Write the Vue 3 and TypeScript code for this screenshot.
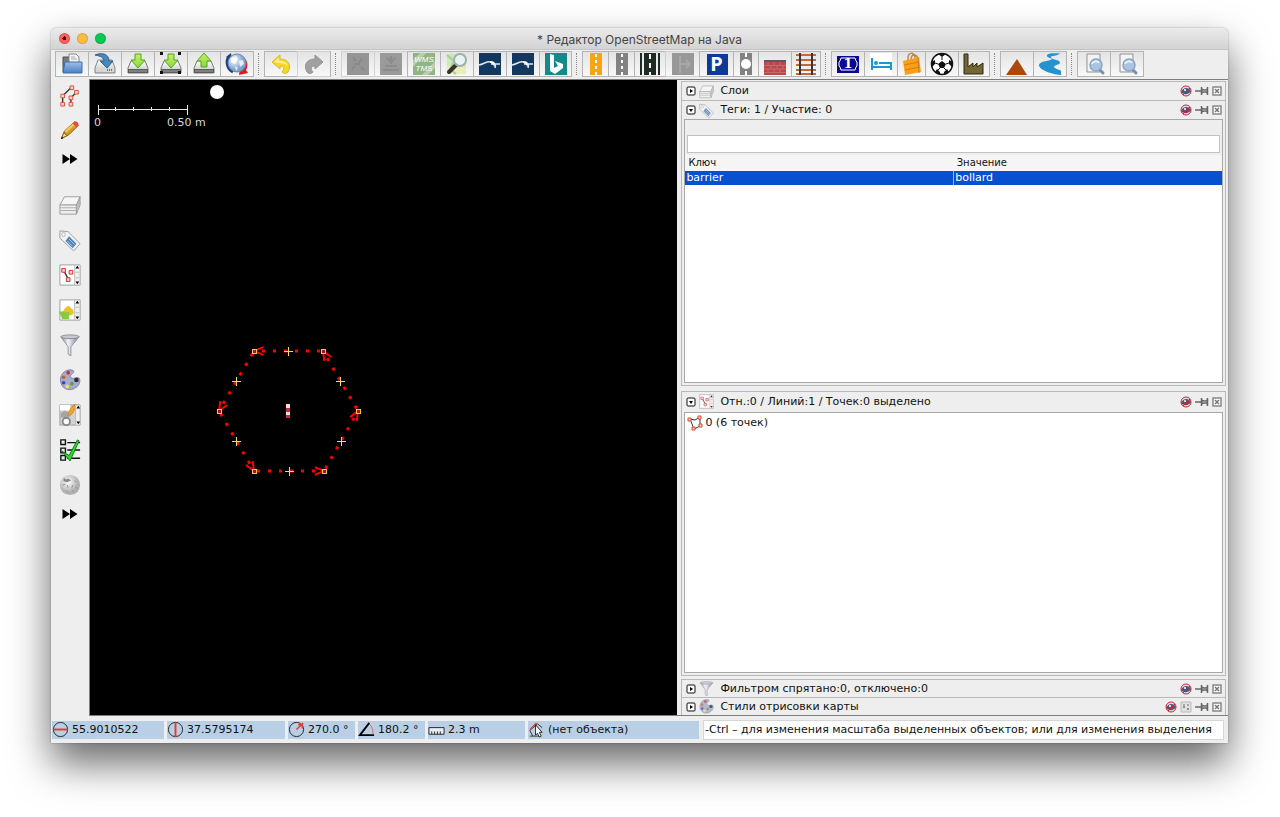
<script setup lang="ts">
import { ref } from 'vue'

interface Tool { icon: string; label: string; w: number; disabled?: boolean }
interface Point { x: number; y: number }

const t = (icon: string, label: string, w = 33, disabled = false): Tool => ({ icon, label, w, disabled })

const toolGroups: Tool[][] = [
  [t('open', 'Открыть'), t('save', 'Сохранить'), t('download', 'Загрузить'), t('download-sel', 'Загрузить область'), t('upload', 'Отправить'), t('globe', 'Обновить')],
  [t('undo', 'Отменить'), t('redo', 'Повторить', 33, true)],
  [t('gray-a', 'Слой', 33, true), t('gray-b', 'Слияние', 33, true), t('wms', 'WMS TMS'), t('find', 'Карта'), t('sat', 'Снимки'), t('sat', 'Снимки 2'), t('bing', 'Bing', 32)],
  [t('road-o', 'Магистраль', 26), t('road-g', 'Дорога', 26), t('road-d', 'Шоссе', 31), t('turn', 'Поворот', 34, true), t('parking', 'Парковка', 34), t('node', 'Узел', 25), t('wall', 'Стена'), t('rail', 'Железная дорога', 29)],
  [t('shield', 'Номер дороги'), t('bed', 'Гостиница'), t('bag', 'Магазин', 28), t('ball', 'Спорт'), t('factory', 'Промзона', 31)],
  [t('peak', 'Вершина'), t('river', 'Река')],
  [t('preset', 'Заготовка'), t('preset', 'Поиск заготовки')],
]
const captions: Record<string, string[]> = { wms: ['WMS', 'TMS'], parking: ['P'], shield: ['1'] }

const modes = [
  { icon: 'select', label: 'Выделение', cls: 'mode' },
  { icon: 'pencil', label: 'Рисование', cls: 'mode' },
  { icon: 'more', label: 'Ещё режимы', cls: 'more' },
]
const dialogs = [
  { icon: 'layers', label: 'Слои', cls: 'dialog' },
  { icon: 'tag', label: 'Теги', cls: 'dialog' },
  { icon: 'selection', label: 'Выделенное', cls: 'dialog' },
  { icon: 'relations', label: 'Отношения', cls: 'dialog' },
  { icon: 'filter', label: 'Фильтр', cls: 'dialog' },
  { icon: 'palette', label: 'Стили', cls: 'dialog' },
  { icon: 'authors', label: 'Правки', cls: 'dialog' },
  { icon: 'check', label: 'Проверка', cls: 'dialog' },
  { icon: 'wiki', label: 'Википедия', cls: 'dialog' },
  { icon: 'more', label: 'Ещё панели', cls: 'more' },
]

const search = ref('')
const help = ref('-Ctrl – для изменения масштаба выделенных объектов; или для изменения выделения')
const tags = [{ key: 'barrier', value: 'bollard' }]

const status = [
  { icon: 'lat', text: '55.9010522', cls: 'lat' },
  { icon: 'lon', text: '37.5795174', cls: 'lon' },
  { icon: 'heading', text: '270.0 °', cls: 'angle' },
  { icon: 'angle', text: '180.2 °', cls: 'angle' },
  { icon: 'ruler', text: '2.3 m', cls: 'dist' },
  { icon: 'cursor', text: '(нет объекта)', cls: 'object' },
]

const nodes: Point[] = [
  { x: 233, y: 271 }, { x: 164, y: 271 }, { x: 129, y: 331 },
  { x: 164, y: 391 }, { x: 234, y: 391 }, { x: 268, y: 331 },
]
const segments = nodes.map((a, i) => {
  const b = nodes[(i + 1) % nodes.length]
  const angle = Math.atan2(b.y - a.y, b.x - a.x)
  const wing = (d: number) => `${b.x - 10 * Math.cos(angle + d)} ${b.y - 10 * Math.sin(angle + d)}`
  return {
    line: `M${a.x} ${a.y}L${b.x} ${b.y}`,
    head: `M${wing(0.4)}L${b.x} ${b.y}L${wing(-0.4)}`,
    mid: `M${Math.floor((a.x + b.x) / 2) - 4} ${Math.floor((a.y + b.y) / 2)}h9m-5 -4v9`,
  }
})
const ticks = [25, 43, 61, 79]
</script>

<template>
  <svg class="sprite" aria-hidden="true">
    <defs>
      <linearGradient id="g-disk" x1="0" y1="0" x2="0" y2="1"><stop offset="0" stop-color="#fff" /><stop offset="1" stop-color="#bfc2c2" /></linearGradient>
      <linearGradient id="g-blue" x1="0" y1="0" x2="0" y2="1"><stop offset="0" stop-color="#9cc0ea" /><stop offset="1" stop-color="#4c7fbd" /></linearGradient>
      <linearGradient id="g-green" x1="0" y1="0" x2="0" y2="1"><stop offset="0" stop-color="#c3f06e" /><stop offset="1" stop-color="#8ad83a" /></linearGradient>
      <linearGradient id="g-metal"><stop offset="0" stop-color="#85859a" /><stop offset=".4" stop-color="#f2f2f8" /><stop offset="1" stop-color="#77778a" /></linearGradient>
      <radialGradient id="g-globe" cx=".35" cy=".35"><stop offset="0" stop-color="#fff" /><stop offset="1" stop-color="#7fa3cf" /></radialGradient>
      <radialGradient id="g-wiki" cx=".4" cy=".35"><stop offset="0" stop-color="#fff" /><stop offset="1" stop-color="#b0b0b0" /></radialGradient>
    </defs>

    <symbol id="open" viewBox="0 0 24 24">
      <path d="M3 20V5h6l1 2h2v12z" fill="#777b80" stroke="#4c5156" /><path d="M9 11V2h7l3 3v9H9z" fill="#f5f5f5" stroke="#888" /><path d="M11 5h4M11 7h6" stroke="#aaa" />
      <path d="M5 10h17v11H3z" fill="url(#g-blue)" stroke="#3b6eae" />
    </symbol>
    <symbol id="disk" viewBox="0 0 24 24">
      <path d="M5 8h14l3 8v5H2v-5z" fill="url(#g-disk)" stroke="#82868a" /><path d="M3 16h18v4H3z" fill="#d5d7d7" /><path d="M14 18h6" stroke="#777" stroke-dasharray="1 1" stroke-width="2" />
    </symbol>
    <symbol id="tray" viewBox="0 0 24 24">
      <path d="M5 9h14l3 7v5H2v-5z" fill="url(#g-disk)" stroke="#77797a" /><path d="M2 17h20v4H2z" fill="#5b5e5b" /><path d="M3 19h18" stroke="#a0a59f" />
    </symbol>
    <symbol id="save" viewBox="0 0 24 24"><use href="#disk" /><path d="M2 3C9 0 16 2 16 9h4l-6 7-7-7h4C11 6 8 4 2 3z" fill="#4d87b8" stroke="#2c608e" /></symbol>
    <symbol id="download" viewBox="0 0 24 24"><use href="#tray" /><path d="M9 2h6v6h4l-7 8-7-8h4z" fill="url(#g-green)" stroke="#55a51b" /></symbol>
    <symbol id="download-sel" viewBox="0 0 24 24"><use href="#tray" /><path d="M9 2h6v6h4l-7 8-7-8h4z" fill="url(#g-green)" stroke="#55a51b" /><path d="M1 0h3v3H1zM19 0h3v3h-3zM1 19h3v3H1zM19 19h3v3h-3z" fill="#111" /></symbol>
    <symbol id="upload" viewBox="0 0 24 24"><use href="#tray" /><path d="M9 15h6V9h4l-7-8-7 8h4z" fill="url(#g-green)" stroke="#55a51b" /></symbol>
    <symbol id="globe" viewBox="0 0 24 24">
      <path d="M1 5l5-4 1 8z" fill="#1d3f7a" /><path d="M3 6A11 11 0 0 0 8 20" fill="none" stroke="#1d3f7a" stroke-width="3" /><path d="M14 3a10 10 0 0 1 7 15l2 3-9 2 1-8 2 2" fill="#d81e1e" />
      <circle cx="12" cy="11" r="9" fill="url(#g-globe)" stroke="#6b86b3" /><path d="M6 6l5-2 2 3-3 5-4-2zM14 9l4-1 1 4-4 3zM10 14l3 2-2 3z" fill="#fff" opacity=".8" />
    </symbol>
    <symbol id="undo" viewBox="0 0 24 24"><path d="M3 10l8-7v4c8 0 12 6 8 13-2 2-4 2-6 0 3-3 2-6-2-6v3z" fill="#f7d922" stroke="#d9b928" /><path d="M5 10l5-4v3c5 0 8 2 9 5-2-2-5-3-9-3z" fill="#fdf09a" /></symbol>
    <symbol id="redo" viewBox="0 0 24 24"><path d="M21 10l-8-7v4C5 7 1 13 5 20c2 2 4 2 6 0-3-3-2-6 2-6v3z" fill="#a0a0a0" stroke="#949494" /></symbol>
    <symbol id="gray-a" viewBox="0 0 24 24"><path d="M1 1h22v22H1z" fill="#959595" /><path d="M7 5l3 4M16 6l-3 5M6 17l3-3M15 15l3 3M9 12h5" stroke="#8a8a8a" stroke-width="2" /></symbol>
    <symbol id="gray-b" viewBox="0 0 24 24"><path d="M1 1h22v22H1z" fill="#9a9a9a" /><path d="M8 6l4 4 4-4M12 4v8M6 14h12M4 18h16" stroke="#8c8c8c" stroke-width="2" fill="none" /></symbol>
    <symbol id="wms" viewBox="0 0 24 24"><path d="M1 1h22v22H1z" fill="#8fb583" /><path d="M1 8l7-7h6L1 15zM10 23L23 9v7l-7 7z" fill="#b7cfaa" /></symbol>
    <symbol id="find" viewBox="0 0 24 24"><path d="M2 2h19v20H2z" fill="#cfe5bc" /><path d="M2 15l9-6 10 7v6H2z" fill="#e9efb6" /><path d="M2 3l7 6-4 8 6 5" stroke="#a8cf90" fill="none" stroke-width="2" /><path d="M11 13l-7 7" stroke="#333" stroke-width="4" stroke-linecap="round" /><circle cx="15" cy="8" r="6" fill="#edf8ff" fill-opacity=".8" stroke="#9db0ac" stroke-width="2" /></symbol>
    <symbol id="sat" viewBox="0 0 24 24"><path d="M1 1h22v22H1z" fill="#13375e" /><path d="M1 13c5-1 8-4 12-3 4 0 5 3 4 6M13 12h9" stroke="#dbeaf4" stroke-width="1.500" fill="none" /><path d="M12 9c4 0 6 3 4 6 0-2-2-4-4-4z" fill="#fff" /></symbol>
    <symbol id="bing" viewBox="0 0 24 24"><path d="M1 1h22v22H1z" fill="#12898a" /><path d="M6 2l4 1v13l4-2-3-5 8 3v4l-8 6-5-3z" fill="#fff" /></symbol>
    <symbol id="road-o" viewBox="0 0 24 24"><path d="M6 1h12v22H6z" fill="#fba40d" /><path d="M12 2v21" stroke="#fff" stroke-width="2" stroke-dasharray="3 3" /></symbol>
    <symbol id="road-g" viewBox="0 0 24 24"><path d="M6 1h12v22H6z" fill="#828282" /><path d="M12 2v21" stroke="#fff" stroke-width="2" stroke-dasharray="3 3" /></symbol>
    <symbol id="road-d" viewBox="0 0 24 24"><path d="M2 1h2v22H2zM6 1h12v22H6zM20 1h2v22h-2z" fill="#1d2b22" /><path d="M12 2v21" stroke="#fff" stroke-width="2" stroke-dasharray="5 4" /></symbol>
    <symbol id="turn" viewBox="0 0 24 24"><path d="M1 1h22v22H1z" fill="#989898" /><path d="M9 4v17M9 12h9M15 8l4 4-4 4" stroke="#a8a8a8" stroke-width="2" fill="none" /></symbol>
    <symbol id="parking" viewBox="0 0 24 24"><path d="M2 2h21v21H2z" fill="#0b3b96" /></symbol>
    <symbol id="node" viewBox="0 0 24 24"><path d="M6 1h12v22H6z" fill="#828282" /><path d="M12 1v22" stroke="#fff" stroke-width="2" stroke-dasharray="4 14" /><circle cx="12" cy="12" r="5" fill="#fff" /></symbol>
    <symbol id="wall" viewBox="0 0 24 24"><path d="M1 8h22v15H1z" fill="#b8484a" /><path d="M1 8h22v2H1z" fill="#5b5b5b" /><path d="M1 13.500h22M1 17h22M1 20.500h22M5 10v3m6-3v3m6-3v3M8 14v3m6-3v3m6-3v3M5 17v3m6-3v3m6-3v3" stroke="#c96a68" fill="none" /></symbol>
    <symbol id="rail" viewBox="0 0 24 24"><path d="M2 3h20M2 8h20M2 13h20M2 18h20M2 22h20" stroke="#c8672f" stroke-width="2" /><path d="M6 1v22M18 1v22" stroke="#3b3432" stroke-width="2" /></symbol>
    <symbol id="shield" viewBox="0 0 24 24"><path d="M1 4h22v17H1z" fill="#0a0a8c" /><path d="M5 6h14l1 3 1 1v4l-1 1-1 3H5l-1-3-1-1v-4l1-1z" fill="none" stroke="#fff" /></symbol>
    <symbol id="bed" viewBox="0 0 24 24"><path d="M1 1h22v22H1z" fill="#fff" /><path d="M3 6v12M22 10v8M3 15h19M10 11h12" stroke="#1b98cf" stroke-width="2" /><circle cx="7" cy="11" r="2" fill="#1b98cf" /></symbol>
    <symbol id="bag" viewBox="0 0 24 24"><path d="M8 8C7 0 15-1 15 6M11 8c0-7 6-6 7-1" fill="none" stroke="#b9854d" stroke-width="1.500" /><path d="M3 9l16-4 2 15-16 3z" fill="#f99f18" /><path d="M4 13l15-3M5 18l15-3M18 6l1 15" stroke="#d97a10" /></symbol>
    <symbol id="ball" viewBox="0 0 24 24"><circle cx="12" cy="12" r="10.500" fill="#fff" stroke="#111" stroke-width="1.500" /><path d="M12 9l4 3-2 4h-4l-2-4zM8 2h8l-4 3zM1 10l4-2v4l-3 3zM23 10l-4-2v4l3 3zM5 20l2-3 3 3v3zM19 20l-2-3-3 3v3z" fill="#111" /><path d="M12 5v3M16 12l3-1M14 16l2 2M10 16l-2 2M8 12l-3-1" stroke="#111" /></symbol>
    <symbol id="factory" viewBox="0 0 24 24"><path d="M2 22V2h4v13l5-4v4l4-4v4l6-4v11z" fill="#746733" stroke="#2c2716" /></symbol>
    <symbol id="peak" viewBox="0 0 24 24"><path d="M12 7l10 16H1z" fill="#ac4808" /></symbol>
    <symbol id="river" viewBox="0 0 24 24"><path d="M9 3c4-3 10-1 13-2-3 4-9 2-9 4 0 3 9 2 9 6-1 2-6 2-6 4 1 2 7 3 7 4v4C13 22 1 18 1 13c0-4 12-4 13-6 0-1-6-1-5-4z" fill="#2493cf" /></symbol>
    <symbol id="preset" viewBox="0 0 24 24"><path d="M5 2h13v18H5z" fill="#f4f4f4" stroke="#919191" /><path d="M17 17l4 4" stroke="#768faa" stroke-width="3" stroke-linecap="round" /><circle cx="14" cy="13" r="6" fill="#a9c4e0" stroke="#8ba3c4" stroke-width="1.500" /><path d="M10 12a4 4 0 0 1 7-1" stroke="#e6f1fc" stroke-width="2" fill="none" /></symbol>

    <symbol id="select" viewBox="0 0 24 24"><path d="M4 20v-8l10-10M13 20v-6l6-6" fill="none" stroke="#333" stroke-width="1.500" /><path d="M2 19h4v4H2zM2 10h4v4H2zM12 1h4v4h-4zM17 6h4v4h-4zM11 12h4v4h-4zM11 19h4v4h-4z" fill="#fbd3c8" stroke="#d9493b" /></symbol>
    <symbol id="pencil" viewBox="0 0 24 24"><path d="M3 21l3-8L17 3l4 4L11 17z" fill="#d59a24" stroke="#80580f" /><path d="M6 13L17 3l2 2L8 15z" fill="#f1c65c" /><path d="M17 3c2-1 5 1 4 4l-2 2-4-4z" fill="#e34a45" /><path d="M3 21l2-6 4 3z" fill="#f1dcb0" stroke="#80580f" /><path d="M2 22l1-3 2 2z" fill="#222" /></symbol>
    <symbol id="more" viewBox="0 0 24 24"><path d="M3 6l9 6-9 6zM12 6l9 6-9 6z" fill="#000" /></symbol>
    <symbol id="layers" viewBox="0 0 24 24"><path d="M1 12L6 3h17l-4 9z" fill="#f6f6f6" stroke="#999" /><path d="M1 12h18v10H1z" fill="#eee" stroke="#999" /><path d="M19 12l4-9v9l-4 10z" fill="#ddd" stroke="#999" /><path d="M1 15h18l4-9M1 18h18l4-9" fill="none" stroke="#aaa" /></symbol>
    <symbol id="tag" viewBox="0 0 24 24"><path d="M1 2l9 1 13 13-7 8L1 10z" fill="#f3f3f3" stroke="#999" /><circle cx="5" cy="6" r="2" fill="#fff" stroke="#aaa" /><path d="M11 8l8 8-4 5-8-8z" fill="#4c82b8" /><path d="M11 11l6 6M9 13l6 6" stroke="#b9d2ea" /></symbol>
    <symbol id="listbox" viewBox="0 0 24 24"><path d="M1 1h22v22H1z" fill="#fff" stroke="#999" /><path d="M17 1h6v22h-6z" fill="#eee" stroke="#bbb" /><path d="M18 5l2-3 2 3zM18 19l2 3 2-3z" fill="#000" /><path d="M18 9h4M18 15h4" stroke="#bbb" /></symbol>
    <symbol id="selection" viewBox="0 0 24 24"><use href="#listbox" /><path d="M5 7l5 9" stroke="#333" stroke-width="1.500" /><path d="M3 5h4v4H3zM11 7h4v4h-4zM8 15h4v4H8z" fill="#fbd3c8" stroke="#d22" /></symbol>
    <symbol id="relations" viewBox="0 0 24 24"><use href="#listbox" /><path d="M5 14c0-4 3-4 4-6h3c0 3 4 2 4 7 0 4-11 4-11-1z" fill="#ecc02a" /><path d="M0 13c2 1 3 1 5 0 2 2 4 2 6 1 1 3-1 5 0 8H3c1-3-3-5-3-9z" fill="#83cc3c" /></symbol>
    <symbol id="filter" viewBox="0 0 24 24"><path d="M2 3l8 11v8l3 2v-10l9-11z" fill="url(#g-metal)" stroke="#8d8da0" /><ellipse cx="12" cy="3" rx="10" ry="2" fill="#c9c9d2" stroke="#888899" /></symbol>
    <symbol id="palette" viewBox="0 0 24 24"><path d="M14 1C5 0 0 8 2 15c2 8 11 9 15 6 5-2 7-8 5-11-3-2-7 2-9-1-2-3 4-4 3-7z" fill="#a9a9c9" stroke="#8080a5" /><circle cx="10" cy="4" r="2" fill="#ba3345" /><circle cx="5" cy="9" r="2" fill="#b9662e" /><circle cx="5" cy="15" r="2" fill="#334bc0" /><circle cx="9" cy="19" r="2" fill="#e9e065" /><circle cx="14" cy="16" r="2" fill="#55a348" /><circle cx="19" cy="12" r="2.500" fill="#252c44" /></symbol>
    <symbol id="authors" viewBox="0 0 24 24"><path d="M1 1h22v22H1z" fill="#d2d2d2" stroke="#999" /><path d="M1 1h11v6H1z" fill="#fff" /><path d="M2 10l4-3 4 2 3 4-5 2H2z" fill="#a5a5a5" /><circle cx="8" cy="19" r="4" fill="#fff" stroke="#888" stroke-width="2" /><path d="M9 13l2-5 5-7 3 2-5 8z" fill="#f3a32c" stroke="#cf8a2c" /><path d="M16 1l3 2 1-3z" fill="#e0443c" /><path d="M18 1h5v22h-5z" fill="#eee" stroke="#bbb" /><path d="M19 5l2-3 2 3zM19 19l2 3 2-3z" fill="#000" /></symbol>
    <symbol id="check" viewBox="0 0 24 24"><path d="M2 1h5v5H2zM2 10h5v5H2zM2 18h5v5H2zM9 4h14M9 12h14M9 21h14" fill="none" stroke="#111" stroke-width="1.500" /><path d="M3 13l8 5L20 1l2 1-10 22z" fill="#28d928" stroke="#12791a" /></symbol>
    <symbol id="wiki" viewBox="0 0 24 24"><circle cx="12" cy="12" r="11" fill="url(#g-wiki)" /><path d="M5 4l3 2 2-1 3 2-4 2-4-1z" fill="#888" /><path d="M4 12l3-1M17 7l2 2M9 12l1 3M15 12l-1 3M18 14l2 2M8 18l2 2M14 18l2 1" fill="none" stroke="#8e8e8e" /></symbol>

    <symbol id="caret-right" viewBox="0 0 10 10"><rect x="1" y="1" width="8" height="8" rx="1" fill="#fff" stroke="#111" /><path d="M4 3l3 2-3 2z" fill="#000" /></symbol>
    <symbol id="caret-down" viewBox="0 0 10 10"><rect x="1" y="1" width="8" height="8" rx="1" fill="#fff" stroke="#111" /><path d="M3 4h4L5 7z" fill="#000" /></symbol>
    <symbol id="eye" viewBox="0 0 12 12"><circle cx="6" cy="6" r="4.500" fill="#dbe0ea" /><path d="M1 7c2-5 8-5 10-1-2 4-8 4-10 1z" fill="#4b5a78" /><circle cx="5" cy="5" r="1" fill="#fff" /><circle cx="6" cy="6" r="5" fill="none" stroke="#d3202a" /><path d="M3 10l7-7" stroke="#d3202a" /></symbol>
    <symbol id="pin" viewBox="0 0 14 12"><path d="M0 6h6" stroke="#666" stroke-width="1.500" /><path d="M6.500 2v8M12.500 2v8" stroke="#666" stroke-width="1.500" /><path d="M7 4l3 1 2-1v4l-2-1-3 1z" fill="#999" stroke="#666" /></symbol>
    <symbol id="close" viewBox="0 0 10 10"><path d="M1 1h8v8H1z" fill="#fff" stroke="#888" stroke-width="1.500" /><path d="M3 3l4 4M7 3L3 7" stroke="#777" stroke-width="1.500" /></symbol>
    <symbol id="prefs" viewBox="0 0 12 12"><path d="M1 1h10v10H1z" fill="#e0e0e0" stroke="#bbb" /><path d="M4 3v4M8 3v2M3 6h2M7 8h2M8 7v2" stroke="#777" /></symbol>
    <symbol id="way" viewBox="0 0 16 16"><path d="M3 4l5 1 5-3v9l-6 3z" fill="none" stroke="#333" /><path d="M1 3h3v3H1zM11 1h3v3h-3zM12 9h3v3h-3zM5 12h3v3H5z" fill="#fbd3c8" stroke="#d9492b" /></symbol>

    <symbol id="lat" viewBox="0 0 18 18"><circle cx="9" cy="9" r="7.500" fill="none" stroke="#222" /><path d="M1 9h16" stroke="#e43b22" stroke-width="2" /></symbol>
    <symbol id="lon" viewBox="0 0 18 18"><circle cx="9" cy="9" r="7.500" fill="none" stroke="#222" /><path d="M9 1v16" stroke="#e43b22" stroke-width="2" /></symbol>
    <symbol id="heading" viewBox="0 0 18 18"><circle cx="9" cy="9" r="7.500" fill="none" stroke="#222" /><path d="M9 9l7-7M11 4h4v4" fill="none" stroke="#e43b22" stroke-width="1.500" /></symbol>
    <symbol id="angle" viewBox="0 0 18 18"><path d="M12 2L2 15h15" fill="none" stroke="#000" stroke-width="2" /><path d="M12 3c3 3 4 7 4 11" fill="none" stroke="#e4635a" /></symbol>
    <symbol id="ruler" viewBox="0 0 18 18"><path d="M1 7h16v7H1z" fill="#e8eef5" stroke="#222" /><path d="M4 11v3M7 11v3M10 11v3M13 11v3" stroke="#222" /></symbol>
    <symbol id="cursor" viewBox="0 0 18 18"><path d="M2 10l8-7 5 4M2 10l3 6M2 16h10" fill="none" stroke="#333" /><path d="M2 9l7-7" stroke="#d9493b" stroke-width="1.500" /><path d="M8 4v11l2-2 2 4 2-1-2-4h3z" fill="#fff" stroke="#222" /></symbol>
  </svg>

  <main class="window">
    <header class="titlebar">
      <button class="light red" aria-label="Закрыть"></button>
      <button class="light amber" aria-label="Свернуть"></button>
      <button class="light green" aria-label="Развернуть"></button>
      <h1>* Редактор OpenStreetMap на Java</h1>
    </header>

    <nav class="toolbar">
      <div v-for="(group, g) in toolGroups" :key="g" class="group">
        <button v-for="(tool, i) in group" :key="i" class="tool" :style="{ width: tool.w + 'px' }" :disabled="tool.disabled" :aria-label="tool.label">
          <svg><use :href="'#' + tool.icon" /></svg>
          <span v-if="captions[tool.icon]" class="caption" :class="'on-' + tool.icon">
            <span v-for="line in captions[tool.icon]" :key="line">{{ line }}</span>
          </span>
        </button>
      </div>
    </nav>

    <div class="workspace">
      <aside class="sidebar">
        <button v-for="m in modes" :key="m.icon" :class="m.cls" :aria-label="m.label"><svg><use :href="'#' + m.icon" /></svg></button>
        <hr>
        <button v-for="d in dialogs" :key="d.icon" :class="d.cls" :aria-label="d.label"><svg><use :href="'#' + d.icon" /></svg></button>
      </aside>

      <section class="map" aria-label="Карта">
        <svg class="canvas">
          <circle cx="127" cy="12" r="7" fill="#fff" />
          <path d="M8 25v10M97 25v10M8 29h89" class="scale" />
          <path v-for="x in ticks" :key="x" :d="`M${x} 27v4`" class="scale" />
          <text x="4" y="46" class="scale-text">0</text>
          <text x="77" y="46" class="scale-text">0.50 m</text>
          <g v-for="(s, i) in segments" :key="i" fill="none">
            <path :d="s.line" class="way" />
            <path :d="s.head" class="head" />
            <path :d="s.mid" class="mid" />
          </g>
          <rect v-for="(n, i) in nodes" :key="i" :x="n.x - 2" :y="n.y - 2" width="4" height="4" class="vertex" />
          <path d="M196 324h4v14h-4z" fill="#f6dede" /><path d="M196 328h4v4h-4zM196 335h4v3h-4z" fill="#cf2840" />
        </svg>
      </section>

      <section class="dock">
        <div class="panel">
          <div class="head-row">
            <button class="toggle" aria-label="Развернуть слои"><svg><use href="#caret-right" /></svg></button>
            <svg class="kind"><use href="#layers" /></svg><h2>Слои</h2>
            <button aria-label="Скрытие"><svg class="i12"><use href="#eye" /></svg></button><button aria-label="Закрепить"><svg class="i14"><use href="#pin" /></svg></button><button aria-label="Закрыть"><svg class="i10"><use href="#close" /></svg></button>
          </div>
        </div>

        <div class="panel grow">
          <div class="head-row">
            <button class="toggle" aria-label="Свернуть теги"><svg><use href="#caret-down" /></svg></button>
            <svg class="kind"><use href="#tag" /></svg><h2>Теги: 1 / Участие: 0</h2>
            <button aria-label="Скрытие"><svg class="i12"><use href="#eye" /></svg></button><button aria-label="Закрепить"><svg class="i14"><use href="#pin" /></svg></button><button aria-label="Закрыть"><svg class="i10"><use href="#close" /></svg></button>
          </div>
          <div class="body">
            <div class="searchbox"><input v-model="search" type="text" aria-label="Поиск тегов"></div>
            <table>
              <thead><tr><th>Ключ</th><th>Значение</th></tr></thead>
              <tbody><tr v-for="tag in tags" :key="tag.key"><td>{{ tag.key }}</td><td>{{ tag.value }}</td></tr></tbody>
            </table>
          </div>
        </div>

        <div class="panel grow spaced">
          <div class="head-row tall">
            <button class="toggle" aria-label="Свернуть выделенное"><svg><use href="#caret-down" /></svg></button>
            <svg class="kind"><use href="#selection" /></svg><h2>Отн.:0 / Линий:1 / Точек:0 выделено</h2>
            <button aria-label="Скрытие"><svg class="i12"><use href="#eye" /></svg></button><button aria-label="Закрепить"><svg class="i14"><use href="#pin" /></svg></button><button aria-label="Закрыть"><svg class="i10"><use href="#close" /></svg></button>
          </div>
          <ul class="body list"><li><svg><use href="#way" /></svg>0 (6 точек)</li></ul>
        </div>

        <div class="panel last">
          <div class="head-row short">
            <button class="toggle" aria-label="Развернуть фильтр"><svg><use href="#caret-right" /></svg></button>
            <svg class="kind"><use href="#filter" /></svg><h2>Фильтром спрятано:0, отключено:0</h2>
            <button aria-label="Скрытие"><svg class="i12"><use href="#eye" /></svg></button><button aria-label="Закрепить"><svg class="i14"><use href="#pin" /></svg></button><button aria-label="Закрыть"><svg class="i10"><use href="#close" /></svg></button>
          </div>
        </div>
        <div class="panel">
          <div class="head-row short">
            <button class="toggle" aria-label="Развернуть стили"><svg><use href="#caret-right" /></svg></button>
            <svg class="kind"><use href="#palette" /></svg><h2>Стили отрисовки карты</h2>
            <button aria-label="Скрытие"><svg class="i12"><use href="#eye" /></svg></button><button aria-label="Настройки"><svg class="i12"><use href="#prefs" /></svg></button><button aria-label="Закрепить"><svg class="i14"><use href="#pin" /></svg></button><button aria-label="Закрыть"><svg class="i10"><use href="#close" /></svg></button>
          </div>
        </div>
      </section>
    </div>

    <footer class="status">
      <div v-for="s in status" :key="s.icon" class="cell" :class="s.cls"><svg><use :href="'#' + s.icon" /></svg>{{ s.text }}</div>
      <input v-model="help" class="help" type="text" readonly aria-label="Подсказка">
    </footer>
  </main>
</template>

<style>
body { background: #fff; }
</style>

<style scoped>
* { box-sizing: border-box; }
.sprite { position: absolute; width: 0; height: 0; }
button { padding: 0; border: 0; background: none; font: inherit; flex: none; }
svg { display: block; flex: none; }
h1, h2 { margin: 0; font-weight: normal; }

.window {
  display: flex; flex-direction: column;
  height: calc(100vh - 102px); min-height: 560px;
  margin: 28px 52px 74px 51px;
  border-radius: 6px 6px 0 0;
  background: #eee; color: #111;
  font-family: "DejaVu Sans", "Noto Sans", sans-serif; font-size: 11px;
  box-shadow: 0 0 2px rgba(0, 0, 0, .35), 0 20px 40px rgba(0, 0, 0, .6);
}
.titlebar {
  display: flex; align-items: center; flex: none; position: relative;
  height: 22px; padding-left: 8px; gap: 7px;
  border-radius: 6px 6px 0 0; border-bottom: 1px solid #c4c4c4;
  background: linear-gradient(#ebebeb, #d3d3d3);
}
.titlebar h1 {
  position: absolute; inset: 0; pointer-events: none;
  text-align: center; font: 12px/23px Inter, sans-serif; color: #444;
}
.light { width: 11px; height: 11px; border-radius: 50%; border: 1px solid rgba(0, 0, 0, .12); }
.red { background: radial-gradient(circle, #5c0e0c 0 2px, #fc605c 2px); }
.amber { background: #fdbc40; }
.green { background: #09c852; }

.toolbar { display: flex; flex: none; height: 29px; padding: 1px 4px; }
.group { display: flex; height: 26px; border-right: 1px solid #b4b4b4; }
.group + .group { margin-left: 10px; position: relative; }
.group + .group::before {
  content: ""; position: absolute; left: -6px; top: 2px; height: 22px;
  border-left: 1px dotted #888;
}
.tool {
  display: flex; align-items: center; justify-content: center; position: relative;
  border: 1px solid #b4b4b4; border-right: 0;
  background: linear-gradient(#e4e4e4, #f8f8f8);
}
.tool:disabled { border-color: #d2d2d2; }
.tool svg { width: 24px; height: 24px; }
.caption {
  position: absolute; inset: 0; display: flex; flex-direction: column;
  align-items: center; justify-content: center; color: #fff;
}
.on-wms { font: italic 8px/9px "Liberation Sans", sans-serif; }
.on-parking { font: bold 20px/22px "Noto Sans", sans-serif; }
.on-shield { font: bold 13px/14px "DejaVu Serif", serif; }

.workspace { display: flex; flex: 1; min-height: 0; }
.sidebar { display: flex; flex-direction: column; align-items: center; width: 38px; flex: none; }
.sidebar button { display: flex; align-items: center; justify-content: center; width: 100%; }
.sidebar hr { width: 100%; height: 16px; margin: 0; border: 0; flex: none; }
.sidebar svg { width: 22px; height: 22px; }
.mode { height: 34px; }
.dialog { height: 35px; }
.more { height: 24px; }
.sidebar .more svg { width: 20px; height: 20px; }

.map { flex: 591; min-width: 0; background: #000; border: solid #7d7d7d; border-width: 1px 0 1px 1px; position: relative; }
.canvas { position: absolute; inset: 0; width: 100%; height: 100%; }
.scale { stroke: #e8e8e8; fill: none; shape-rendering: crispEdges; }
.scale-text { fill: #d8d8d8; font-size: 11px; }
.way { stroke: #f00; stroke-width: 3; stroke-dasharray: 3 8; stroke-dashoffset: -3; }
.head { stroke: #f00; stroke-width: 2; }
.mid { stroke: #f4e04c; shape-rendering: crispEdges; }
.vertex { fill: #a81500; stroke: #ffc63c; stroke-width: 1; shape-rendering: crispEdges; }

.dock {
  display: flex; flex-direction: column; flex: 548; min-width: 0;
  padding: 1px 2px 0 4px; border: solid #7d7d7d; border-width: 1px 0;
}
.panel { display: flex; flex-direction: column; border: 1px solid #b9b9b9; border-bottom: 0; }
.panel.grow { flex: 1; min-height: 0; padding: 0 2px 2px; border-bottom: 1px solid #b9b9b9; }
.panel.grow .head-row { margin: 0 -2px; }
.panel.spaced { margin-top: 5px; }
.panel.last { margin-top: 3px; }
.head-row { display: flex; align-items: center; flex: none; height: 18px; padding: 0 3px 0 4px; gap: 3px; }
.head-row.tall { height: 20px; }
.head-row.short { height: 17px; }
.head-row h2 { flex: 1; font-size: 11px; line-height: 16px; margin-left: 3px; }
.toggle svg, .i10 { width: 10px; height: 10px; }
.i12 { width: 12px; height: 12px; }
.i14 { width: 14px; height: 12px; }
.kind { width: 15px; height: 15px; opacity: .8; }
.body { flex: 1; min-height: 0; background: #fff; border: 1px solid #a8a8a8; }
.searchbox { padding: 15px 2px 2px; background: #eee; }
.searchbox input { display: block; width: 100%; height: 18px; border: 1px solid #c2c2c2; background: #fff; font: inherit; outline: 0; }
table { width: 100%; border-collapse: collapse; table-layout: fixed; }
th { height: 16px; padding: 0 3px; background: #f5f5f5; text-align: left; font-size: 10px; font-weight: normal; line-height: 16px; }
td { height: 14px; padding: 0 1px; background: #0750d0; color: #fff; line-height: 14px; }
td + td { border-left: 1px solid #9db9ea; }
.list { margin: 0; padding: 2px; list-style: none; }
.list li { display: flex; align-items: center; gap: 2px; height: 16px; }
.list svg { width: 16px; height: 16px; }

.status { display: flex; align-items: center; flex: none; height: 27px; padding: 0 4px 0 1px; gap: 3px; }
.cell { display: flex; align-items: center; gap: 3px; height: 18px; background: #b8cfe5; white-space: nowrap; overflow: hidden; }
.cell svg { width: 17px; height: 17px; }
.lat { width: 112px; }
.lon { width: 118px; }
.angle { width: 67px; }
.dist { width: 97px; }
.object { width: 171px; }
.help {
  flex: 1; min-width: 0; height: 20px; margin-left: 1px; padding: 0 1px;
  border: 1px solid #d6d6d6; background: #fff; color: #111; font: inherit; outline: 0;
}
</style>
